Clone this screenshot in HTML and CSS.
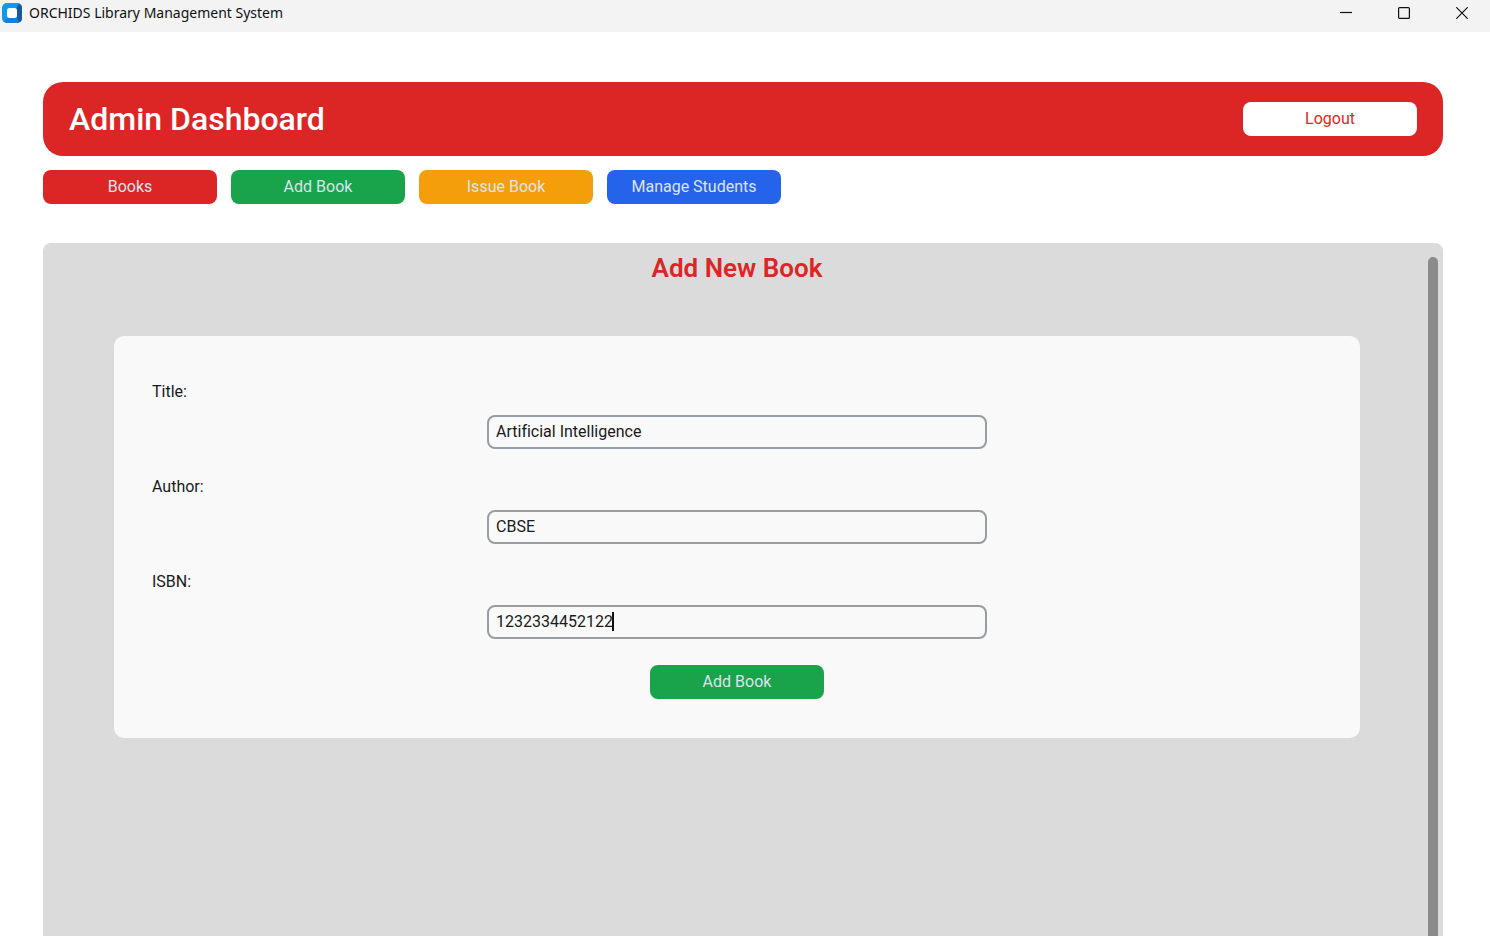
FILE: index.html
```html
<!DOCTYPE html>
<html lang="en">
<head>
<meta charset="utf-8">
<title>ORCHIDS Library Management System</title>
<link rel="stylesheet" href="styles.css">
</head>
<body>
<div class="window">
  <div class="titlebar">
    <svg class="app-icon" width="20" height="20" viewBox="0 0 20 20" aria-hidden="true">
      <rect width="20" height="20" rx="5" fill="#1296ee"/>
      <path d="M14.5 5 17 .5Q20 1.500 20 5v10q0 3.500-3 4.500L14.500 15z" fill="#1559a0"/>
      <path d="M5 15h9.500l2.500 4.500Q16 20 15 20H5q-2 0-3.600-1.400z" fill="#147fdc"/>
      <rect x="5" y="5" width="10" height="10" rx="2.500" fill="#fff"/>
    </svg>
    <span class="window-title">ORCHIDS Library Management System</span>
    <div class="window-controls">
      <button type="button" class="window-button" aria-label="Minimize"><svg width="12" height="12" viewBox="0 0 12 12"><path d="M0 5.5h12"/></svg></button>
      <button type="button" class="window-button" aria-label="Maximize"><svg width="12" height="12" viewBox="0 0 12 12"><rect x=".6" y=".6" width="10.8" height="10.8" rx="1"/></svg></button>
      <button type="button" class="window-button" aria-label="Close"><svg width="12" height="12" viewBox="0 0 12 12"><path d="M.3.3l11.4 11.4M11.7.3.3 11.7"/></svg></button>
    </div>
  </div>
  <main class="page">
    <header class="header">
      <h1 class="header-title">Admin Dashboard</h1>
      <button type="button" class="button button-logout">Logout</button>
    </header>
    <nav class="nav">
      <button type="button" class="button button-red">Books</button>
      <button type="button" class="button button-green">Add Book</button>
      <button type="button" class="button button-amber">Issue Book</button>
      <button type="button" class="button button-blue">Manage Students</button>
    </nav>
    <section class="panel">
      <div class="panel-content">
        <h2 class="panel-title">Add New Book</h2>
        <form class="card">
          <div class="field">
            <label class="label" for="title">Title:</label>
            <div class="entry"><input class="input" id="title" type="text" value="Artificial Intelligence"></div>
          </div>
          <div class="field">
            <label class="label" for="author">Author:</label>
            <div class="entry"><input class="input" id="author" type="text" value="CBSE"></div>
          </div>
          <div class="field">
            <label class="label" for="isbn">ISBN:</label>
            <div class="entry"><input class="input" id="isbn" type="text" value="1232334452122"><span class="caret"></span></div>
          </div>
          <button type="button" class="button button-green">Add Book</button>
        </form>
      </div>
      <div class="scrollbar"></div>
    </section>
  </main>
</div>
</body>
</html>
```
FILE: styles.css
```css
* {
  box-sizing: border-box;
}

body {
  margin: 0;
  background: #fff;
  color: #1a1a1a;
  font: 16px/24px Roboto, sans-serif;
  font-variant-ligatures: none;
}

.window {
  display: flex;
  flex-direction: column;
  min-height: 100vh;
}

.titlebar {
  display: flex;
  align-items: center;
  height: 32px;
  padding: 0 0 6px 2px;
  background: #f3f3f3;
}

.window-title {
  margin-left: 7px;
  color: #111;
  font: 14px/20px "Noto Sans", sans-serif;
}

.window-controls {
  display: flex;
  margin-left: auto;
}

.window-button {
  display: flex;
  align-items: center;
  justify-content: center;
  width: 58px;
  height: 26px;
  padding: 0 0 0 2px;
  border: 0;
  background: none;
}

.window-button svg {
  fill: none;
  stroke: #111;
  stroke-width: 1.2;
}

.page {
  display: flex;
  flex: 1;
  flex-direction: column;
  padding: 50px 47px 0 43px;
}

.header {
  display: flex;
  align-items: center;
  justify-content: space-between;
  padding: 20px 26px;
  border-radius: 20px;
  background: #dc2626;
}

.header-title {
  margin: 0;
  color: #fff;
  font-size: 32px;
  font-weight: 500;
  line-height: 34px;
}

.button {
  width: 174px;
  height: 34px;
  padding: 0;
  border: 0;
  border-radius: 8px;
  color: #dce4ee;
  font: inherit;
}

.button-logout {
  background: #fff;
  color: #dc2626;
}

.button-red {
  background: #dc2626;
}

.button-green {
  background: #19a34a;
}

.button-amber {
  background: #f59e0b;
}

.button-blue {
  background: #2563eb;
}

.nav {
  display: flex;
  gap: 14px;
  margin: 14px 0 39px;
}

.panel {
  display: flex;
  flex: 1;
  padding: 0 5px 0 0;
  border-radius: 8px 8px 0 0;
  background: #dbdbdb;
}

.panel-content {
  flex: 1;
  padding: 9px 68px 40px 71px;
}

.panel-title {
  margin: 0 0 52px;
  color: #dc2626;
  font-size: 26px;
  font-weight: 600;
  line-height: 32px;
  text-align: center;
}

.scrollbar {
  width: 10px;
  margin-top: 14px;
  border-radius: 5px 5px 0 0;
  background: #8b8b8b;
}

.card {
  display: flex;
  flex-direction: column;
  align-items: center;
  gap: 26px;
  padding: 44px 38px 39px;
  border-radius: 10px;
  background: #f9f9f9;
}

.field {
  display: flex;
  flex-direction: column;
  align-items: center;
  gap: 11px;
  width: 100%;
}

.label {
  align-self: flex-start;
}

.entry {
  position: relative;
  width: 100%;
  max-width: 500px;
}

.input {
  display: block;
  width: 100%;
  height: 34px;
  padding: 0 7px 2px;
  border: 2px solid #979da2;
  border-radius: 8px;
  outline: 0;
  background: #f9f9fa;
  color: inherit;
  font: inherit;
  font-variant-ligatures: none;
}

.caret {
  position: absolute;
  top: 7px;
  left: calc(13ch + 8px);
  width: 2px;
  height: 19px;
  background: #111;
}
```
